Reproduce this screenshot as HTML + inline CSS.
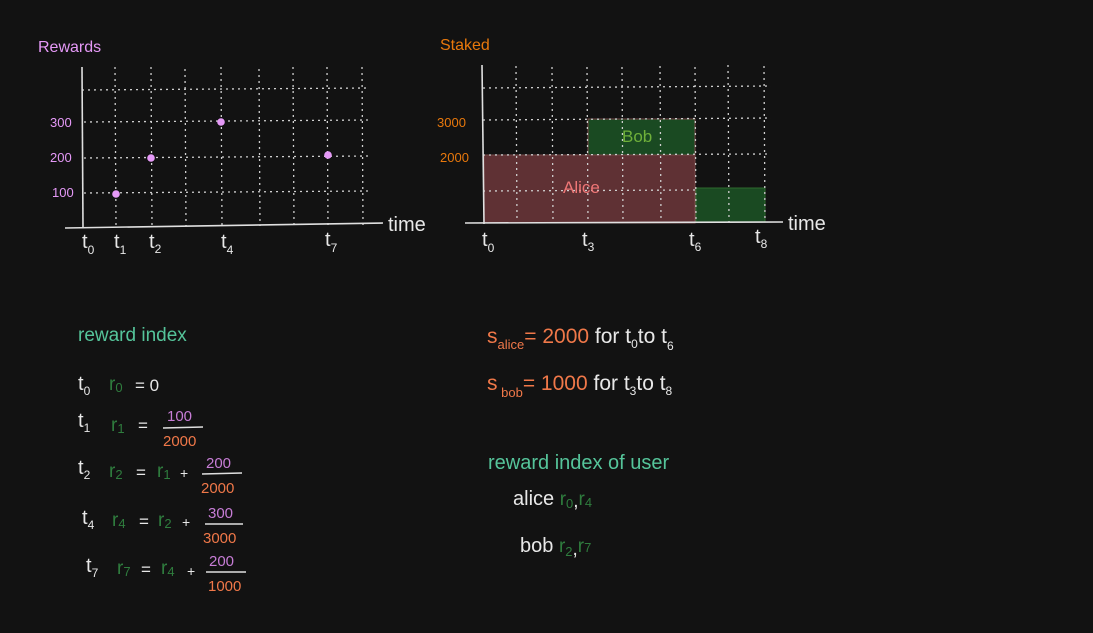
<!DOCTYPE html>
<html><head><meta charset="utf-8"><style>
html,body{margin:0;padding:0;background:#121212;}
svg{display:block}
text{font-family:"Liberation Sans",sans-serif;}
</style></head><body>
<svg width="1093" height="633" viewBox="0 0 1093 633" xmlns="http://www.w3.org/2000/svg">
<rect width="1093" height="633" fill="#121212"/>
<!-- Rewards chart -->
<g stroke="#cfcfcf" stroke-width="1.3" stroke-dasharray="2 4" fill="none">
<line x1="115" y1="67" x2="116" y2="226"/><line x1="151" y1="67" x2="152" y2="226"/>
<line x1="185" y1="69" x2="186" y2="226"/><line x1="221" y1="67" x2="222" y2="226"/>
<line x1="259" y1="69" x2="260" y2="226"/><line x1="293" y1="67" x2="294" y2="226"/>
<line x1="327" y1="67" x2="328" y2="226"/><line x1="362" y1="67" x2="363" y2="225"/>
<line x1="82" y1="90" x2="370" y2="88"/><line x1="84" y1="122" x2="370" y2="120"/>
<line x1="84" y1="158" x2="371" y2="156"/><line x1="84" y1="193" x2="371" y2="191"/>
</g>
<g stroke="#e0e0e0" stroke-width="1.6"><line x1="82" y1="67" x2="83" y2="228"/><line x1="65" y1="228" x2="383" y2="223"/></g>
<g fill="#e599f7"><circle cx="116" cy="194" r="3.8"/><circle cx="151" cy="158" r="3.8"/><circle cx="221" cy="122" r="3.8"/><circle cx="328" cy="155" r="3.8"/></g>
<g fill="#e599f7" font-size="13"><text x="38" y="52" font-size="16">Rewards</text>
<text x="50" y="127">300</text><text x="50" y="162">200</text><text x="52" y="197">100</text></g>
<g fill="#e8e8e8" font-size="20"><text x="388" y="231">time</text>
<text x="82" y="248">t<tspan font-size="12" dy="6">0</tspan></text>
<text x="114" y="248">t<tspan font-size="12" dy="6">1</tspan></text>
<text x="149" y="248">t<tspan font-size="12" dy="5">2</tspan></text>
<text x="221" y="248">t<tspan font-size="12" dy="6">4</tspan></text>
<text x="325" y="246">t<tspan font-size="12" dy="6">7</tspan></text></g>

<!-- Staked chart -->
<rect x="484" y="155" width="211" height="68" fill="#5f3134" stroke="#7a4a4a"/>
<rect x="588" y="119" width="107" height="36" fill="#1a4a22" stroke="#7a4a4a"/>
<rect x="696" y="188" width="69" height="34" fill="#1a4a22" stroke="#2f6a2f"/>
<g stroke="#cfcfcf" stroke-width="1.3" stroke-dasharray="2 4" fill="none">
<line x1="516" y1="66" x2="517" y2="222"/><line x1="552" y1="67" x2="553" y2="222"/>
<line x1="587" y1="67" x2="588" y2="222"/><line x1="622" y1="67" x2="623" y2="222"/>
<line x1="660" y1="66" x2="661" y2="222"/><line x1="695" y1="67" x2="696" y2="222"/>
<line x1="728" y1="65" x2="729" y2="222"/><line x1="764" y1="66" x2="765" y2="222"/>
<line x1="483" y1="88" x2="771" y2="86"/><line x1="483" y1="120" x2="771" y2="118"/>
<line x1="483" y1="155" x2="771" y2="154"/><line x1="483" y1="191" x2="695" y2="190"/>
</g>
<g stroke="#e0e0e0" stroke-width="1.6"><line x1="482" y1="65" x2="484" y2="224"/><line x1="465" y1="223" x2="783" y2="222"/></g>
<text x="440" y="50" fill="#e8780c" font-size="16">Staked</text>
<g fill="#e8780c" font-size="13"><text x="437" y="127">3000</text><text x="440" y="162">2000</text></g>
<text x="622" y="142" fill="#6fb03a" font-size="17">Bob</text>
<text x="563" y="193" fill="#ee7676" font-size="17">Alice</text>
<g fill="#e8e8e8" font-size="20"><text x="788" y="230">time</text>
<text x="482" y="246">t<tspan font-size="12" dy="6">0</tspan></text>
<text x="582" y="246">t<tspan font-size="12" dy="5">3</tspan></text>
<text x="689" y="246">t<tspan font-size="12" dy="5">6</tspan></text>
<text x="755" y="243">t<tspan font-size="12" dy="5">8</tspan></text></g>

<!-- reward index -->
<text x="78" y="341" fill="#55c49a" font-size="19">reward index</text>
<g font-size="19">
<text x="78" y="390" fill="#e8e8e8" font-size="20">t<tspan font-size="12" dy="5">0</tspan></text>
<text x="109" y="390" fill="#2f7d3e">r<tspan font-size="13" dy="2">0</tspan></text>
<text x="135" y="391" fill="#e8e8e8" font-size="17">= 0</text>

<text x="78" y="427" fill="#e8e8e8" font-size="20">t<tspan font-size="12" dy="5">1</tspan></text>
<text x="111" y="431" fill="#2f7d3e">r<tspan font-size="13" dy="2">1</tspan></text>
<text x="138" y="431" fill="#e8e8e8" font-size="17">=</text>
<text x="167" y="421" fill="#c77dd6" font-size="15">100</text>
<line x1="163" y1="428" x2="203" y2="427" stroke="#e0e0e0" stroke-width="1.5"/>
<text x="163" y="446" fill="#f07849" font-size="15">2000</text>

<text x="78" y="474" fill="#e8e8e8" font-size="20">t<tspan font-size="12" dy="5">2</tspan></text>
<text x="109" y="477" fill="#2f7d3e">r<tspan font-size="13" dy="2">2</tspan></text>
<text x="136" y="478" fill="#e8e8e8" font-size="17">=</text>
<text x="157" y="477" fill="#2f7d3e">r<tspan font-size="13" dy="2">1</tspan></text>
<text x="180" y="478" fill="#e8e8e8" font-size="14">+</text>
<text x="206" y="468" fill="#c77dd6" font-size="15">200</text>
<line x1="202" y1="474" x2="242" y2="473" stroke="#e0e0e0" stroke-width="1.5"/>
<text x="201" y="493" fill="#f07849" font-size="15">2000</text>

<text x="82" y="524" fill="#e8e8e8" font-size="20">t<tspan font-size="12" dy="5">4</tspan></text>
<text x="112" y="526" fill="#2f7d3e">r<tspan font-size="13" dy="2">4</tspan></text>
<text x="139" y="527" fill="#e8e8e8" font-size="17">=</text>
<text x="158" y="526" fill="#2f7d3e">r<tspan font-size="13" dy="2">2</tspan></text>
<text x="182" y="527" fill="#e8e8e8" font-size="14">+</text>
<text x="208" y="518" fill="#c77dd6" font-size="15">300</text>
<line x1="205" y1="524" x2="243" y2="524" stroke="#e0e0e0" stroke-width="1.5"/>
<text x="203" y="543" fill="#f07849" font-size="15">3000</text>

<text x="86" y="572" fill="#e8e8e8" font-size="20">t<tspan font-size="12" dy="5">7</tspan></text>
<text x="117" y="574" fill="#2f7d3e">r<tspan font-size="13" dy="2">7</tspan></text>
<text x="141" y="575" fill="#e8e8e8" font-size="17">=</text>
<text x="161" y="574" fill="#2f7d3e">r<tspan font-size="13" dy="2">4</tspan></text>
<text x="187" y="576" fill="#e8e8e8" font-size="14">+</text>
<text x="209" y="566" fill="#c77dd6" font-size="15">200</text>
<line x1="206" y1="572" x2="246" y2="572" stroke="#e0e0e0" stroke-width="1.5"/>
<text x="208" y="591" fill="#f07849" font-size="15">1000</text>
</g>

<!-- s lines -->
<g font-size="21">
<text x="487" y="343" fill="#f07849">s<tspan font-size="13" dy="6">alice</tspan><tspan dy="-6">= 2000</tspan> <tspan fill="#e8e8e8">for t<tspan font-size="12" dy="5">0</tspan><tspan dy="-5">to t</tspan><tspan font-size="12" dy="7">6</tspan></tspan></text>
<text x="487" y="390" fill="#f07849">s<tspan font-size="13" dy="7"> bob</tspan><tspan dy="-7">= 1000</tspan> <tspan fill="#e8e8e8">for t<tspan font-size="12" dy="5">3</tspan><tspan dy="-5">to t</tspan><tspan font-size="12" dy="5">8</tspan></tspan></text>
</g>
<text x="488" y="469" fill="#55c49a" font-size="20">reward index of user</text>
<text x="513" y="505" fill="#e8e8e8" font-size="20">alice <tspan fill="#2f7d3e" font-size="19">r<tspan font-size="13" dy="3">0</tspan><tspan dy="-1" fill="#e8e8e8">,</tspan><tspan dy="-2">r</tspan><tspan font-size="13" dy="2">4</tspan></tspan></text>
<text x="520" y="552" fill="#e8e8e8" font-size="20">bob <tspan fill="#2f7d3e" font-size="19">r<tspan font-size="13" dy="4">2</tspan><tspan dy="-1" fill="#e8e8e8">,</tspan><tspan dy="-3">r</tspan><tspan font-size="13" dy="0">7</tspan></tspan></text>
</svg>
</body></html>
